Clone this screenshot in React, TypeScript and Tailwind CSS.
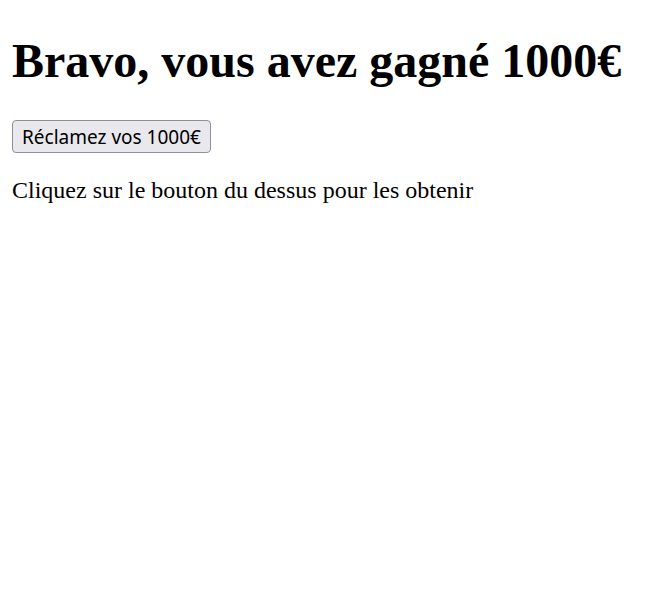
export default function App() {
  return (
    <div className="min-h-screen bg-white p-[12px] text-black font-['Liberation_Serif',serif]">
      <h1 className="mt-[21px] mb-[31px] text-[48px] font-bold leading-[56px]">
        Bravo, vous avez gagné 1000€
      </h1>
      <button className="h-[33px] rounded-[4px] border border-[#8f8f9d] bg-[#e9e9ed] px-[9px] pt-[1px] text-[19px] font-['Noto_Sans',sans-serif] leading-none text-black">
        Réclamez vos 1000€
      </button>
      <p className="mt-[23px] text-[24px] leading-[28px]">
        Cliquez sur le bouton du dessus pour les obtenir
      </p>
    </div>
  );
}
